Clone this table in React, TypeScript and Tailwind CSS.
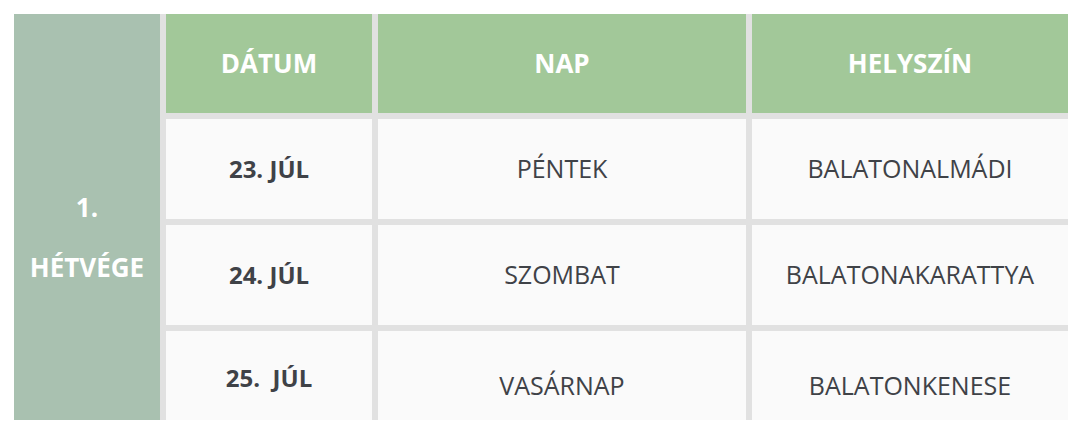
const ROWS = [
  { date: '23. JÚL', day: 'PÉNTEK', place: 'BALATONALMÁDI' },
  { date: '24. JÚL', day: 'SZOMBAT', place: 'BALATONAKARATTYA' },
]

export default function App() {
  return (
    <div className="w-[1082px] h-[436px] bg-white pt-[14px] pl-[14px] font-['Open_Sans',sans-serif]">
      <div className="grid w-[1054px] grid-cols-[146px_206px_368px_316px] grid-rows-[99px_100px_100px_89px] gap-[6px] bg-[#e1e1e1]">
        <div className="row-span-4 flex flex-col items-center bg-[#a9c1b0] pt-[177px] text-[26px] font-bold text-white">
          <div className="leading-[32px]">1.</div>
          <div className="mt-[28px] leading-[32px]">HÉTVÉGE</div>
        </div>
        <div className="flex items-center justify-center bg-[#a2c899] text-[26px] font-bold text-white">DÁTUM</div>
        <div className="flex items-center justify-center bg-[#a2c899] text-[26px] font-bold text-white">NAP</div>
        <div className="flex items-center justify-center bg-[#a2c899] text-[26px] font-bold text-white">HELYSZÍN</div>

        {ROWS.map((r) => (
          <>
            <div key={r.date} className="flex items-center justify-center bg-[#fafafa] text-[24px] font-bold text-[#3f4247]">{r.date}</div>
            <div className="flex items-center justify-center bg-[#fafafa] text-[25px] text-[#3f4247]">{r.day}</div>
            <div className="flex items-center justify-center bg-[#fafafa] text-[25px] text-[#3f4247]">{r.place}</div>
          </>
        ))}

        <div className="flex justify-center bg-[#fafafa] pt-[31px] text-[24px] leading-[32px] font-bold text-[#3f4247]">25.&nbsp; JÚL</div>
        <div className="flex justify-center bg-[#fafafa] pt-[38px] text-[25px] leading-[32px] text-[#3f4247]">VASÁRNAP</div>
        <div className="flex justify-center bg-[#fafafa] pt-[38px] text-[25px] leading-[32px] text-[#3f4247]">BALATONKENESE</div>
      </div>
    </div>
  )
}
